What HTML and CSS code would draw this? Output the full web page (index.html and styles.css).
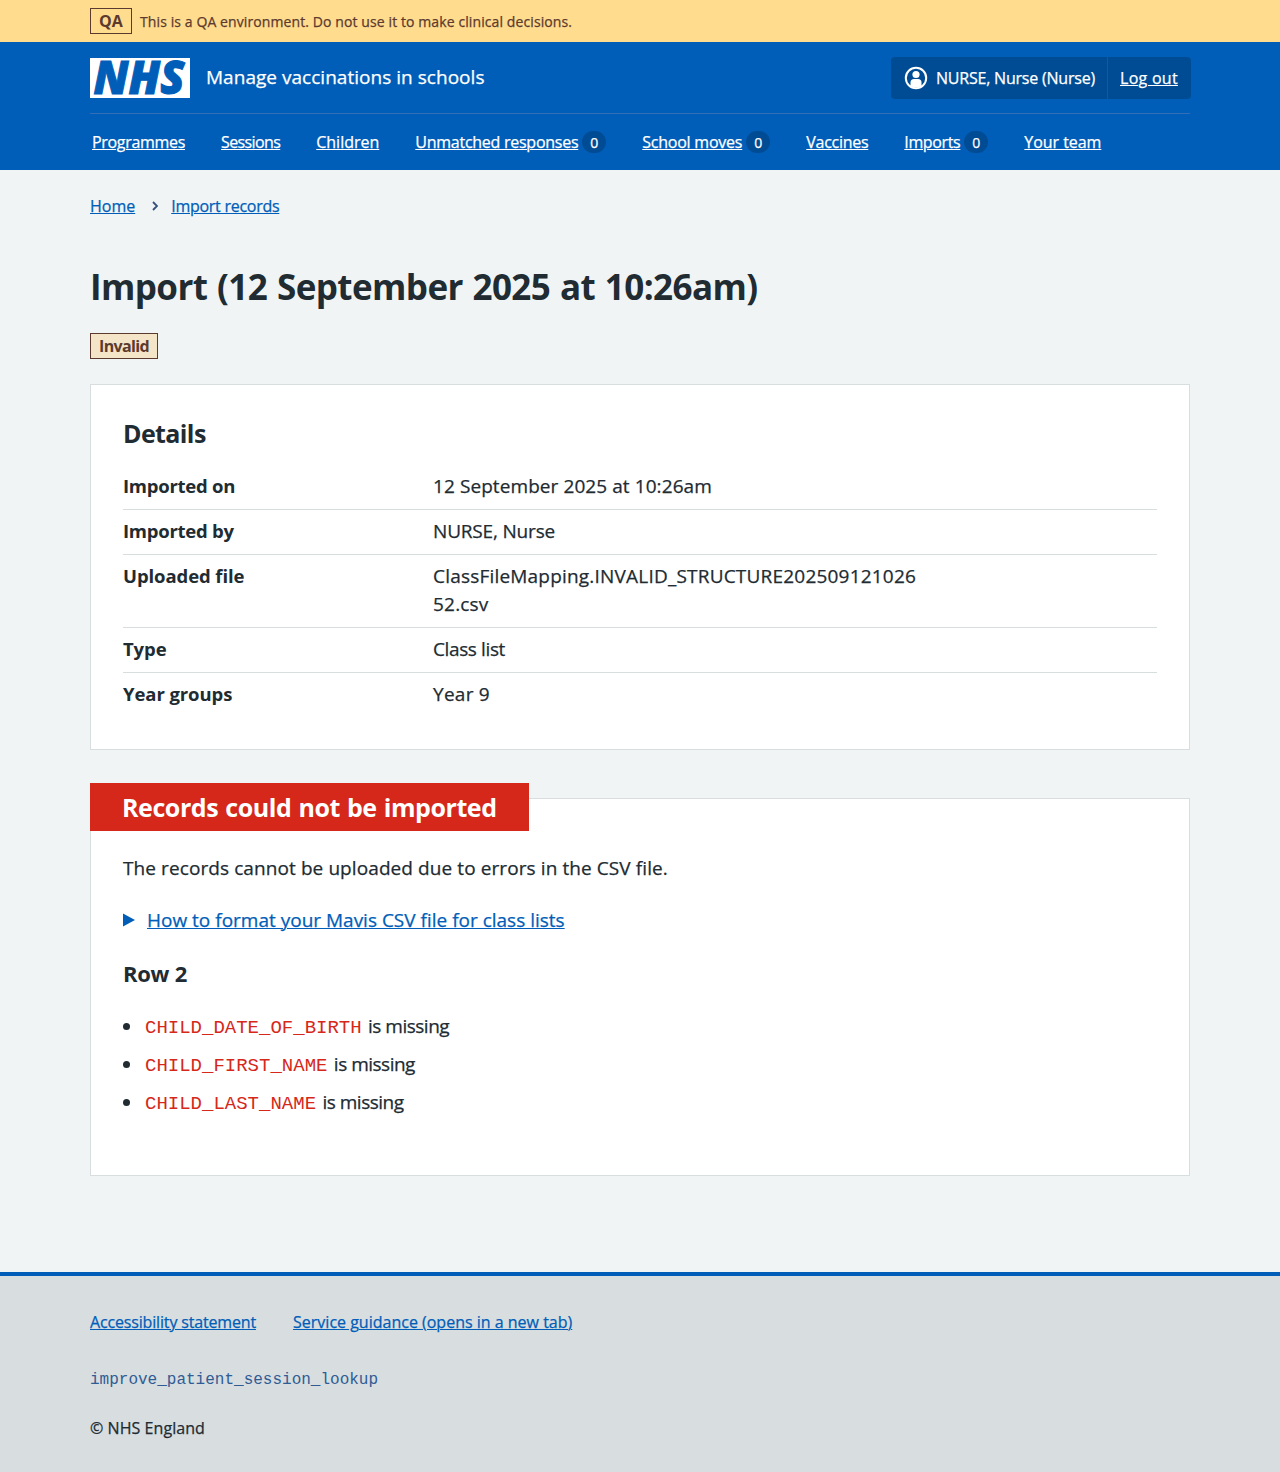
FILE: index.html
```html
<!DOCTYPE html>
<html lang="en">
<head>
<meta charset="utf-8">
<title>Import – Manage vaccinations in schools</title>
<link rel="stylesheet" href="styles.css">
</head>
<body>
<div class="environment">
  <div class="container environment-row">
    <strong class="tag tag-environment">QA</strong>
    <span class="environment-text">This is a QA environment. Do not use it to make clinical decisions.</span>
  </div>
</div>
<header class="header">
  <div class="container">
    <div class="header-top">
      <a class="service" href="#">
        <svg class="logo" viewBox="0 0 100 40" role="img" aria-label="NHS"><rect width="100" height="40" fill="#fff"/><text class="logo-text" x="3.500" y="36" textLength="91" lengthAdjust="spacingAndGlyphs">NHS</text></svg>
        <span class="service-name">Manage vaccinations in schools</span>
      </a>
      <div class="account">
        <span class="account-user"><svg class="user-icon" viewBox="0 0 24 24"><circle cx="12" cy="12" r="10.200" fill="none" stroke="#fff" stroke-width="2"/><circle cx="12" cy="8.500" r="3.600" fill="#fff"/><path d="M6.500 20v-3.500a3.500 3.500 0 0 1 3.500-3.500h4a3.500 3.500 0 0 1 3.500 3.500V20a10 10 0 0 1-11 0z" fill="#fff"/></svg><span class="account-name">NURSE, Nurse (Nurse)</span></span>
        <span class="account-logout"><a href="#">Log out</a></span>
      </div>
    </div>
    <nav class="nav">
      <div class="nav-item nav-programmes"><a href="#">Programmes</a></div>
      <div class="nav-item nav-sessions"><a href="#">Sessions</a></div>
      <div class="nav-item nav-children"><a href="#">Children</a></div>
      <div class="nav-item nav-responses"><a href="#">Unmatched responses</a><span class="count">0</span></div>
      <div class="nav-item nav-moves"><a href="#">School moves</a><span class="count">0</span></div>
      <div class="nav-item nav-vaccines"><a href="#">Vaccines</a></div>
      <div class="nav-item nav-imports"><a href="#">Imports</a><span class="count">0</span></div>
      <div class="nav-item nav-team"><a href="#">Your team</a></div>
    </nav>
  </div>
</header>
<main class="container main">
  <nav class="breadcrumb">
    <a href="#">Home</a>
    <svg class="chevron" viewBox="0 0 6 10"><path d="M1 1l4 4-4 4" fill="none" stroke="#34507a" stroke-width="1.800"/></svg>
    <a class="breadcrumb-current" href="#">Import records</a>
  </nav>
  <h1 class="title">Import (12 September 2025 at 10:26am)</h1>
  <strong class="tag tag-invalid">Invalid</strong>
  <section class="card card-details">
    <h2 class="card-title">Details</h2>
    <dl class="summary">
      <div class="row"><dt class="key-wide">Imported on</dt><dd>12 September 2025 at 10:26am</dd></div>
      <div class="row"><dt class="key-wide">Imported by</dt><dd class="tight">NURSE, Nurse</dd></div>
      <div class="row"><dt>Uploaded file</dt><dd class="file">ClassFileMapping.INVALID_STRUCTURE20250912102652.csv</dd></div>
      <div class="row"><dt>Type</dt><dd class="tighter">Class list</dd></div>
      <div class="row"><dt>Year groups</dt><dd class="loose">Year 9</dd></div>
    </dl>
  </section>
  <section class="card card-error">
    <h2 class="card-label">Records could not be imported</h2>
    <p class="message">The records cannot be uploaded due to errors in the CSV file.</p>
    <div class="expander"><svg class="arrow" viewBox="0 0 12 14"><path d="M0 0.500l12 6.500-12 6.500z" fill="#005eb8"/></svg><a href="#">How to format your Mavis CSV file for class lists</a></div>
    <h3 class="row-title">Row 2</h3>
    <ul class="errors">
      <li><code>CHILD_DATE_OF_BIRTH</code> is missing</li>
      <li><code>CHILD_FIRST_NAME</code> is missing</li>
      <li><code>CHILD_LAST_NAME</code> is missing</li>
    </ul>
  </section>
</main>
<footer class="footer">
  <div class="container">
    <div class="footer-links"><a class="footer-accessibility" href="#">Accessibility statement</a><a href="#">Service guidance (opens in a new tab)</a></div>
    <p class="branch">improve_patient_session_lookup</p>
    <p class="copyright">© NHS England</p>
  </div>
</footer>
</body>
</html>
```
FILE: styles.css
```css
*{box-sizing:border-box}
body{margin:0;font:400 16px/24px "Open Sans","Noto Sans",sans-serif;color:#212b32;background:#f0f4f5;-webkit-text-stroke:.25px}
h1,h2,h3,p,dl,dd,ul{margin:0}
h1,h2,h3,dt,strong,code,.branch{-webkit-text-stroke:0}
a{color:#005eb8;text-underline-offset:1px;text-decoration-thickness:1px}
.container{width:1100px;margin:0 auto}

.environment{height:42px;background:#ffdc8e;color:#5c3a2e}
.environment-row{display:flex;align-items:center;gap:8px;height:42px}
.environment-text{font-size:14px;letter-spacing:.1px;padding-top:1px}
.tag{display:block;border:1px solid;padding:0 0 0 8px;height:26px;line-height:24px;font-weight:700;white-space:nowrap}
.tag-environment{width:42px;letter-spacing:.1px}
.tag-invalid{width:68px;margin-top:22px;color:#5c3a2e;background:#f5e5c8;letter-spacing:-.64px}

.header{height:128px;background:#005eb8;color:#fff}
.header a{color:#fff}
.header-top{height:72px;display:flex;align-items:center;justify-content:space-between;border-bottom:1px solid #336eb6}
.service{display:flex;gap:16px;text-decoration:none;align-items:center}
.logo{width:100px;height:40px;overflow:visible}
.logo-text{font:italic 800 46px "Open Sans",sans-serif;fill:#005eb8;stroke:#005eb8;stroke-width:1}
.service-name{font-size:19px;line-height:28px;letter-spacing:.03px;padding-bottom:2px}
.account{display:flex;background:#004c94;width:300px;height:42px;border-radius:4px;margin-right:-1px;line-height:42px;white-space:nowrap}
.account-user{display:flex;align-items:center;width:217px;padding-left:13px;border-right:1px solid #005eb8}
.account-name{letter-spacing:-.21px}
.user-icon{width:24px;height:24px;margin-right:8px}
.account-logout{padding-left:12px;letter-spacing:.28px}
.nav{display:flex;gap:36px;padding:16px 2px;white-space:nowrap}
.nav-item{display:flex;align-items:center}
.nav-programmes{letter-spacing:-.31px}
.nav-sessions{letter-spacing:-.62px}
.nav-responses{letter-spacing:-.26px}
.nav-moves{letter-spacing:-.23px}
.nav-vaccines{letter-spacing:-.27px}
.nav-imports{letter-spacing:-.36px}
.nav-team{letter-spacing:-.05px}
.count{width:24px;height:22px;margin-left:4px;border-radius:11px;background:#004c94;font-size:14px;line-height:23px;text-align:center;letter-spacing:0}

.main{height:1102px;padding-top:24px}
.breadcrumb{display:flex;align-items:center;height:24px}
.chevron{width:6px;height:10px;margin:0 13px 0 17px}
.breadcrumb-current{letter-spacing:-.27px}
.title{margin-top:45px;font-size:35px;line-height:48px;font-weight:700;letter-spacing:-.58px;word-spacing:1.2px;white-space:nowrap}
.card{background:#fff;border:1px solid #d8dde0;padding:32px}
.card-details{margin-top:25px;height:366px}
.card-title,.card-label{font-size:25px;line-height:32px;font-weight:700}
.card-title{letter-spacing:-.6px}
.summary{margin-top:15px}
.row{display:flex;font-size:19px;line-height:28px;padding:8px 0;border-bottom:1px solid #d8dde0}
.row:first-child{padding-bottom:9px}
.row:nth-child(n+2){padding:7px 0 9px}
.row:last-child{border-bottom:0}
dt{width:310px;font-weight:700;font-size:18.500px;letter-spacing:-.09px}
.key-wide{letter-spacing:-.26px}
dd{width:486px;letter-spacing:.08px;overflow-wrap:anywhere}
.file{letter-spacing:.2px}
.tight{letter-spacing:-.18px}
.tighter{letter-spacing:-.38px}
.loose{letter-spacing:.26px}

.card-error{height:378px;margin-top:48px;padding-top:0}
.card-label{width:439px;height:48px;margin:-16px 0 0 -33px;padding:8px 32px;color:#fff;background:#d5281b;letter-spacing:-.43px;word-spacing:1px;white-space:nowrap}
.message{margin-top:23px;font-size:19px;line-height:28px;letter-spacing:.09px}
.expander{display:flex;align-items:center;gap:12px;margin-top:24px;font-size:19px;line-height:28px}
.arrow{width:12px;height:14px}
.row-title{margin-top:24px;font-size:22px;line-height:30px;font-weight:700;letter-spacing:-.26px}
.errors{margin-top:24px;padding-left:20px;font-size:19px;line-height:28px;letter-spacing:-.5px}
.errors li{margin-bottom:10px}
.errors code{padding:0 2px;font:19px/1 "Liberation Mono",monospace;letter-spacing:0;color:#d5281b}

.footer{height:200px;border-top:4px solid #005eb8;background:#d8dde0;padding-top:34px}
.footer-links{display:flex;gap:37px}
.footer-accessibility{letter-spacing:-.16px}
.branch{margin-top:34px;font-family:"Liberation Mono",monospace;color:#2f5c94}
.copyright{margin-top:24px;letter-spacing:.06px}
```
